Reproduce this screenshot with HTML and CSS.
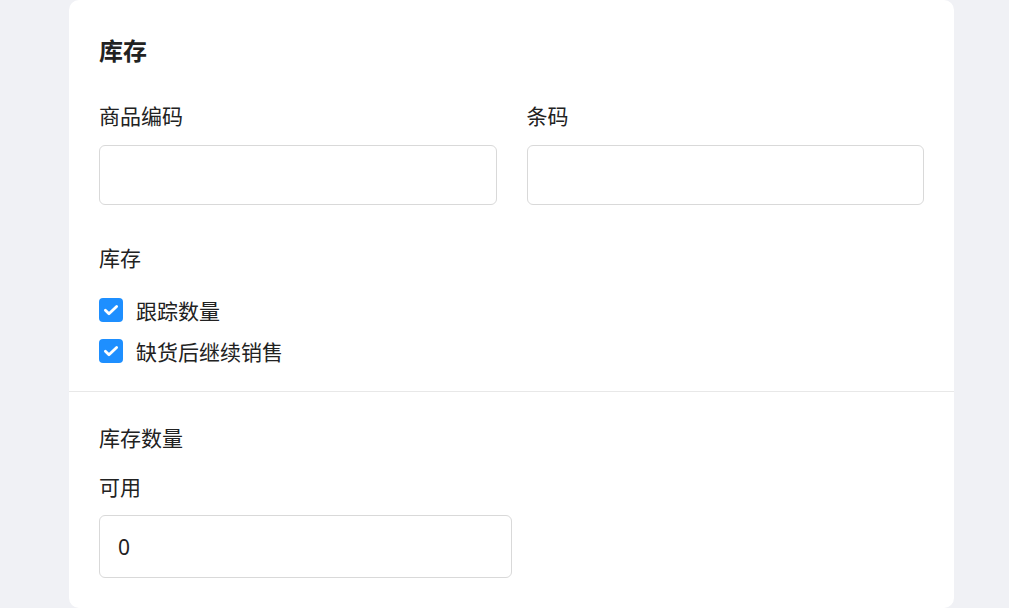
FILE: index.html
```html
<!DOCTYPE html>
<html lang="zh-CN">
<head>
    <meta charset="UTF-8">
    <meta name="viewport" content="width=device-width, initial-scale=1.0">
    <title>库存</title>
    <link rel="stylesheet" href="styles.css">
</head>
<body>
    <div class="card">
        <div class="section">
            <h2 class="title">库存</h2>
            <div class="row">
                <div class="field">
                    <label for="sku">商品编码</label>
                    <input type="text" id="sku">
                </div>
                <div class="field">
                    <label for="barcode">条码</label>
                    <input type="text" id="barcode">
                </div>
            </div>

            <div class="label stock-label">库存</div>
            <label class="check">
                <input type="checkbox" checked>
                <span class="box">
                    <svg width="18" height="18" viewBox="0 0 16 16"><path d="M3 8.3l3.2 3.1L13 4.9" fill="none" stroke="#fff" stroke-width="2.5" stroke-linecap="round" stroke-linejoin="round"/></svg>
                </span>
                跟踪数量
            </label>
            <label class="check second">
                <input type="checkbox" checked>
                <span class="box">
                    <svg width="18" height="18" viewBox="0 0 16 16"><path d="M3 8.3l3.2 3.1L13 4.9" fill="none" stroke="#fff" stroke-width="2.5" stroke-linecap="round" stroke-linejoin="round"/></svg>
                </span>
                缺货后继续销售
            </label>
        </div>

        <div class="section bottom">
            <div class="label">库存数量</div>
            <div class="field half">
                <label for="available" class="avail-label">可用</label>
                <input type="text" id="available" class="tall" value="0">
            </div>
        </div>
    </div>
</body>
</html>
```
FILE: styles.css
```css
* {
    box-sizing: border-box;
}
body {
    margin: 0;
    background-color: #f0f1f5;
    font-family: "Noto Sans CJK SC", "Noto Sans", sans-serif;
    color: #222;
}
.card {
    width: 885px;
    margin-left: 69px;
    background: #fff;
    border-radius: 10px;
}
.section {
    padding: 30px 30px 25px;
    border-bottom: 1px solid #e8e8e8;
}
.section.bottom {
    border-bottom: none;
    padding: 30px 30px 30px;
}
.title {
    margin: 0;
    font-size: 24px;
    font-weight: bold;
    line-height: 40px;
    color: #222;
}
.row {
    display: flex;
    gap: 30px;
    margin-top: 30px;
}
.field {
    flex: 1;
    display: flex;
    flex-direction: column;
}
.field.half {
    width: 413px;
    margin-top: 19px;
}
.field label,
.label {
    font-size: 21px;
    line-height: 30px;
}
.field input {
    margin-top: 15px;
    height: 60px;
    border: 1px solid #d9d9d9;
    border-radius: 6px;
    padding: 0 18px;
    font-family: "Noto Sans", sans-serif;
    font-size: 21px;
    color: #222;
    outline: none;
}
.field input.tall {
    margin-top: 14px;
    height: 63px;
}
.stock-label {
    margin-top: 37px;
}
.check {
    display: flex;
    align-items: center;
    gap: 13px;
    height: 30px;
    margin-top: 23px;
    font-size: 21px;
    cursor: pointer;
}
.check.second {
    margin-top: 11px;
}
.check input {
    display: none;
}
.box {
    width: 24px;
    height: 24px;
    border-radius: 4px;
    background: #1e8fff;
    display: flex;
    align-items: center;
    justify-content: center;
}
```
